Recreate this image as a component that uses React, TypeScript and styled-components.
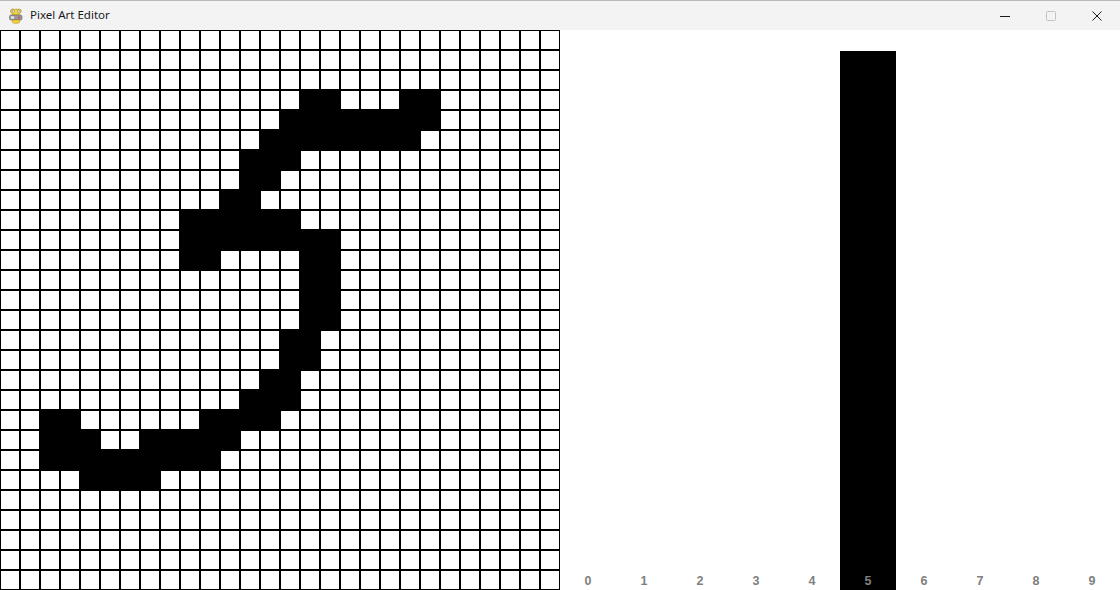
import React from "react";
import styled, { createGlobalStyle } from "styled-components";

const GlobalStyle = createGlobalStyle`
  html, body { margin: 0; padding: 0; background: #ffffff; }
  body { font-family: "Noto Sans", "Liberation Sans", sans-serif; }
  * { box-sizing: border-box; }
`;

const ROWS: Record<number, [number, number][]> = {
  3: [[15, 16], [20, 21]],
  4: [[14, 21]],
  5: [[13, 20]],
  6: [[12, 14]],
  7: [[12, 13]],
  8: [[11, 12]],
  9: [[9, 14]],
  10: [[9, 16]],
  11: [[9, 10], [15, 16]],
  12: [[15, 16]],
  13: [[15, 16]],
  14: [[15, 16]],
  15: [[14, 15]],
  16: [[14, 15]],
  17: [[13, 14]],
  18: [[12, 14]],
  19: [[2, 3], [10, 13]],
  20: [[2, 4], [7, 11]],
  21: [[2, 10]],
  22: [[4, 7]],
};

const isOn = (r: number, c: number) =>
  (ROWS[r] || []).some(([a, b]) => c >= a && c <= b);

const PROBS = [0, 0, 0, 0, 0, 1, 0, 0, 0, 0];
const BAR_MAX = 539;

const Window = styled.div`
  width: 1120px;
  height: 590px;
  display: flex;
  flex-direction: column;
  overflow: hidden;
`;

const TitleBar = styled.div`
  height: 30px;
  flex: 0 0 30px;
  display: flex;
  align-items: center;
  background: #f3f3f3;
  border-top: 1px solid #b9b9b9;
`;

const AppIcon = styled.div`
  width: 16px;
  height: 16px;
  margin-left: 8px;
  margin-right: 6px;
  display: flex;
`;

const Title = styled.span`
  font-family: "Noto Sans", "Liberation Sans", sans-serif;
  font-size: 11.5px;
  color: #1a1a1a;
  flex: 1;
  line-height: 1;
  margin-top: -1px;
`;

const Controls = styled.div`
  display: flex;
  height: 100%;
`;

const CtrlButton = styled.div`
  width: 46px;
  height: 100%;
  display: flex;
  align-items: center;
  justify-content: center;
`;

const Content = styled.div`
  flex: 1;
  display: flex;
  background: #ffffff;
`;

const Grid = styled.div`
  display: grid;
  grid-template-columns: repeat(28, 20px);
  grid-template-rows: repeat(28, 20px);
  width: 560px;
  height: 560px;
`;

const Cell = styled.div<{ $on: boolean }>`
  width: 20px;
  height: 20px;
  border: 1px solid #000;
  background: ${(p) => (p.$on ? "#000" : "#fff")};
`;

const Chart = styled.div`
  width: 560px;
  height: 560px;
  display: flex;
`;

const Column = styled.div`
  position: relative;
  width: 56px;
  height: 100%;
  display: flex;
  flex-direction: column;
  justify-content: flex-end;
`;

const Bar = styled.div`
  width: 100%;
  background: #000;
`;

const Label = styled.span`
  position: absolute;
  left: 0;
  right: 0;
  bottom: 2px;
  text-align: center;
  font-family: "Liberation Sans", Arial, sans-serif;
  font-weight: bold;
  font-size: 12.5px;
  line-height: 14px;
  color: #808080;
`;

const PygameIcon = () => (
  <svg width="16" height="16" viewBox="0 0 16 16">
    <path d="M2.5 3 C2.5 1 5 0.3 6.5 1.6 C7.5 0.9 9 0.9 10 1.6 C12 0.4 14 2 13 4 C12.6 4.8 11.8 5.3 11.3 5.7 L11.3 7 L4.3 7 L4.3 5.7 C3.3 5.2 2.5 4.3 2.5 3 Z" fill="#f5d33a" stroke="#a88412" strokeWidth="0.6" />
    <circle cx="5.2" cy="3.2" r="1.2" fill="#fff" stroke="#555" strokeWidth="0.5" />
    <circle cx="10.8" cy="3.2" r="1.2" fill="#fff" stroke="#555" strokeWidth="0.5" />
    <rect x="1.5" y="7" width="12.5" height="5" rx="1.5" fill="#9a9a9a" stroke="#555" strokeWidth="0.5" />
    <rect x="3" y="8.3" width="3" height="2.4" fill="#e8e8e8" />
    <circle cx="11" cy="9.5" r="1" fill="#d04a4a" />
    <path d="M4 12 L4.5 14.6 C6 15.6 10 15.6 11.5 14.6 L12 12 Z" fill="#f5d33a" stroke="#a88412" strokeWidth="0.5" />
  </svg>
);

export default function App() {
  const cells: React.ReactNode[] = [];
  for (let r = 0; r < 28; r++) {
    for (let c = 0; c < 28; c++) {
      cells.push(<Cell key={`${r}-${c}`} $on={isOn(r, c)} />);
    }
  }
  return (
    <>
      <GlobalStyle />
      <Window>
        <TitleBar>
          <AppIcon>
            <PygameIcon />
          </AppIcon>
          <Title>Pixel Art Editor</Title>
          <Controls>
            <CtrlButton>
              <svg width="10" height="10" viewBox="0 0 10 10">
                <line x1="0" y1="5.5" x2="10" y2="5.5" stroke="#1a1a1a" strokeWidth="1" />
              </svg>
            </CtrlButton>
            <CtrlButton>
              <svg width="10" height="10" viewBox="0 0 10 10">
                <rect x="0.5" y="0.5" width="9" height="9" rx="1" fill="none" stroke="#c4c4c4" strokeWidth="1" />
              </svg>
            </CtrlButton>
            <CtrlButton>
              <svg width="10" height="10" viewBox="0 0 10 10">
                <path d="M0.5 0.5 L9.5 9.5 M9.5 0.5 L0.5 9.5" stroke="#1a1a1a" strokeWidth="1" />
              </svg>
            </CtrlButton>
          </Controls>
        </TitleBar>
        <Content>
          <Grid>{cells}</Grid>
          <Chart>
            {PROBS.map((p, i) => (
              <Column key={i}>
                <Bar style={{ height: `${p * BAR_MAX}px` }} />
                <Label>{i}</Label>
              </Column>
            ))}
          </Chart>
        </Content>
      </Window>
    </>
  );
}
